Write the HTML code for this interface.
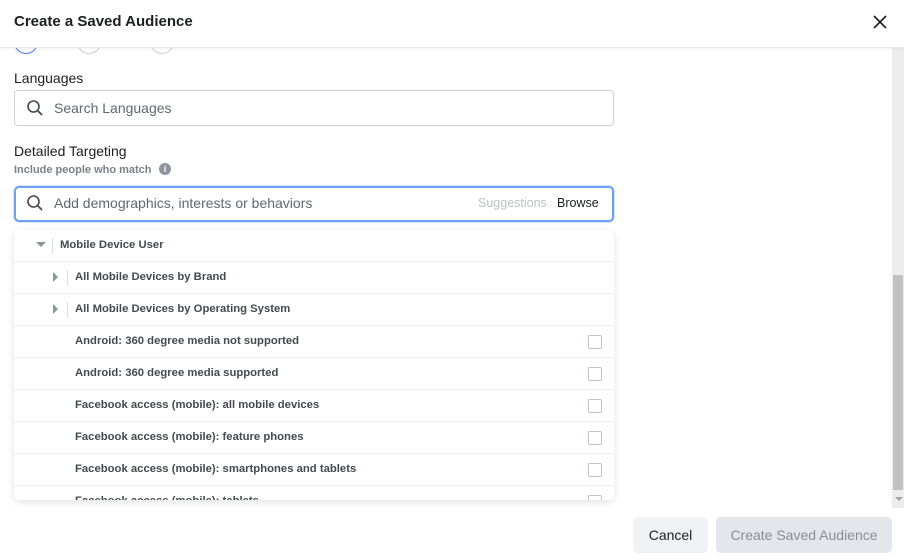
<!DOCTYPE html><html><head><style>
body{margin:0;width:904px;height:560px;background:#fff;font-family:"Liberation Sans",sans-serif;position:relative;overflow:hidden;color:#1c1e21}
.a{position:absolute}
.hdr{left:0;top:0;width:904px;height:47px;border-bottom:1px solid #e4e6eb;box-shadow:0 1px 3px rgba(0,0,0,.06);background:#fff;z-index:3}
.inp{border:1px solid #ccd0d5;border-radius:4px;background:#fff}
.row{position:absolute;left:0;width:600px;height:31px;border-bottom:1px solid #ebedf0;font-size:11.3px;font-weight:bold;color:#444950;line-height:31px}
.cb{position:absolute;left:574px;top:9px;width:12px;height:12px;border:1px solid #bec3c9;border-radius:2px}
.tri{position:absolute;width:0;height:0}
</style></head><body>
<div class="a hdr"><div class="a" style="left:14px;top:13px;font-size:15px;font-weight:bold;color:#1c1e21">Create a Saved Audience</div>
<svg class="a" style="left:873px;top:15px" width="14" height="14"><path d="M1 1L13 13M13 1L1 13" stroke="#1c1e21" stroke-width="1.6"/></svg></div>
<div class="a" style="left:14px;top:30px;width:22px;height:22px;border:1px solid #4a78e0;border-radius:50%"></div>
<div class="a" style="left:77px;top:30px;width:22px;height:22px;border:1px solid #ccd0d5;border-radius:50%"></div>
<div class="a" style="left:150px;top:30px;width:22px;height:22px;border:1px solid #ccd0d5;border-radius:50%"></div>
<div class="a" style="left:14px;top:70px;font-size:14px">Languages</div>
<div class="a inp" style="left:14px;top:90px;width:598px;height:34px"></div>
<svg class="a" style="left:26px;top:99px" width="18" height="18"><circle cx="7.5" cy="7.5" r="5.5" fill="none" stroke="#444950" stroke-width="1.6"/><path d="M11.5 11.5L16 16" stroke="#444950" stroke-width="1.8"/></svg>
<div class="a" style="left:54px;top:100px;font-size:14px;color:#606770">Search Languages</div>
<div class="a" style="left:14px;top:143px;font-size:14px">Detailed Targeting</div>
<div class="a" style="left:14px;top:164px;font-size:11px;font-weight:bold;color:#7b8088">Include people who match</div>
<div class="a" style="left:159px;top:163px;width:12px;height:12px;border-radius:50%;background:#8d949e;color:#fff;font-size:9px;font-weight:bold;text-align:center;line-height:12px">i</div>
<div class="a" style="left:14px;top:186px;width:596px;height:32px;border:2px solid #70a1f0;border-radius:5px;box-shadow:0 0 0 1px #d8e4fb"></div>
<svg class="a" style="left:26px;top:194px" width="18" height="18"><circle cx="7.5" cy="7.5" r="5.5" fill="none" stroke="#444950" stroke-width="1.6"/><path d="M11.5 11.5L16 16" stroke="#444950" stroke-width="1.8"/></svg>
<div class="a" style="left:54px;top:195px;font-size:14px;color:#606770">Add demographics, interests or behaviors</div>
<div class="a" style="left:478px;top:196px;font-size:12.5px;color:#bcc0c4">Suggestions</div>
<div class="a" style="left:557px;top:196px;font-size:12.5px;color:#1c1e21">Browse</div>
<div class="a" style="left:14px;top:230px;width:600px;height:270px;border-radius:6px;box-shadow:0 2px 8px rgba(0,0,0,.12);overflow:hidden;background:#fff">
<div class="row" style="top:0"><div class="tri" style="left:22px;top:12px;border-left:5px solid transparent;border-right:5px solid transparent;border-top:5px solid #8d949e"></div><div class="a" style="left:38px;top:8px;width:1px;height:16px;background:#dadde1"></div><span class="a" style="left:46px">Mobile Device User</span></div>
<div class="row" style="top:32px"><div class="tri" style="left:39px;top:10px;border-top:5px solid transparent;border-bottom:5px solid transparent;border-left:5px solid #8d949e"></div><div class="a" style="left:53px;top:8px;width:1px;height:16px;background:#dadde1"></div><span class="a" style="left:61px">All Mobile Devices by Brand</span></div>
<div class="row" style="top:64px"><div class="tri" style="left:39px;top:10px;border-top:5px solid transparent;border-bottom:5px solid transparent;border-left:5px solid #8d949e"></div><div class="a" style="left:53px;top:8px;width:1px;height:16px;background:#dadde1"></div><span class="a" style="left:61px">All Mobile Devices by Operating System</span></div>
<div class="row" style="top:96px"><span class="a" style="left:61px">Android: 360 degree media not supported</span><div class="cb"></div></div>
<div class="row" style="top:128px"><span class="a" style="left:61px">Android: 360 degree media supported</span><div class="cb"></div></div>
<div class="row" style="top:160px"><span class="a" style="left:61px">Facebook access (mobile): all mobile devices</span><div class="cb"></div></div>
<div class="row" style="top:192px"><span class="a" style="left:61px">Facebook access (mobile): feature phones</span><div class="cb"></div></div>
<div class="row" style="top:224px"><span class="a" style="left:61px">Facebook access (mobile): smartphones and tablets</span><div class="cb"></div></div>
<div class="row" style="top:256px"><span class="a" style="left:61px">Facebook access (mobile): tablets</span><div class="cb"></div></div>
</div>
<div class="a" style="left:892px;top:48px;width:12px;height:460px;background:#ececec"></div>
<div class="a" style="left:893px;top:275px;width:10px;height:215px;background:#c1c1c1"></div>
<div class="tri a" style="left:895px;top:497px;border-left:4px solid transparent;border-right:4px solid transparent;border-top:4px solid #a3a3a3"></div>
<div class="a" style="left:633px;top:517px;width:75px;height:36px;border-radius:5px;background:#f0f2f5;font-size:14px;text-align:center;line-height:36px">Cancel</div>
<div class="a" style="left:716px;top:517px;width:176px;height:36px;border-radius:5px;background:#e4e6eb;font-size:14px;color:#8a8d91;text-align:center;line-height:36px">Create Saved Audience</div>
</body></html>
